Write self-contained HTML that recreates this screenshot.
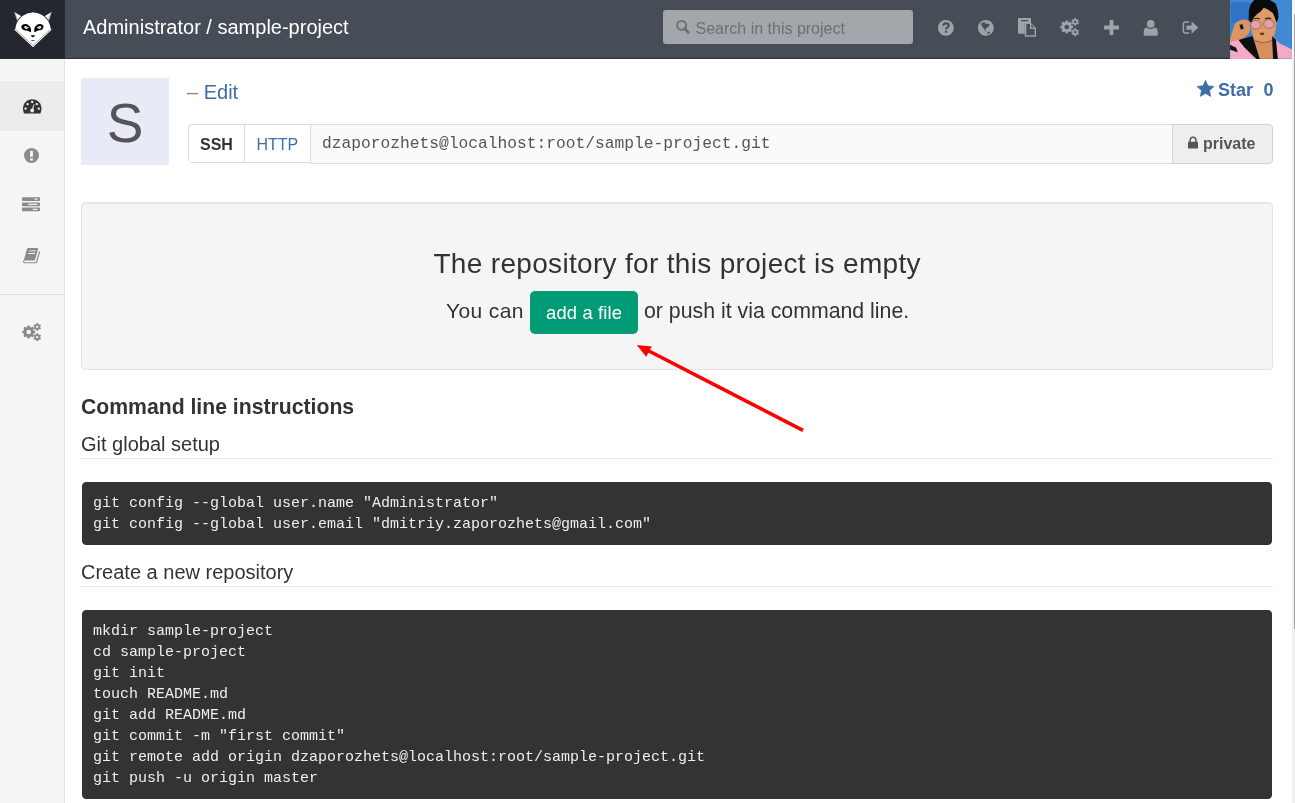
<!DOCTYPE html>
<html>
<head>
<meta charset="utf-8">
<style>
*{box-sizing:border-box}
html,body{margin:0;padding:0}
body{width:1295px;height:803px;overflow:hidden;position:relative;will-change:transform;background:#fff;font-family:"Liberation Sans",sans-serif;color:#333}
.abs{position:absolute}
.nw{white-space:nowrap}
#hdr{left:0;top:0;width:1295px;height:59px;background:#474d57;border-bottom:1px solid #2c3038}
#logo{left:0;top:0;width:65px;height:59px;background:#24272d;border-bottom:1px solid #24272d}
#title{left:83px;top:17px;font-size:20px;line-height:20px;color:#fff}
#search{left:663px;top:10px;width:250px;height:34px;background:#a3a6ab;border-radius:3px}
#search span{position:absolute;left:32.5px;top:11px;font-size:16px;line-height:16px;color:#6d6f73}
svg{position:absolute;overflow:visible}
.hi{fill:#9ea3aa}
#uav{left:1228px;top:0;width:66px;height:60px}
#sbar{left:1292px;top:59px;width:3px;height:744px;background:#f1f1f1}
#sbar2{left:1292px;top:0;width:3px;height:59px;background:#f6f6f6}
#thumb{left:1294px;top:14px;width:1px;height:615px;background:#a3a3a3}
#side{left:0;top:60px;width:65px;height:743px;background:#f5f5f5;border-right:1px solid #e3e3e3}
#sep{left:0;top:294px;width:64px;height:1px;background:#e0e0e0}
#act{left:0;top:81px;width:64px;height:50px;background:#ececec}
.si{fill:#8a8a8a}
#av{left:81px;top:78px;width:88px;height:87px;background:#e8eaf6;color:#555;font-size:55px;line-height:90px;text-align:center}
#edit{left:187px;top:82px;font-size:20px;line-height:20px;color:#888}
#edit b{font-weight:normal;color:#3f6ea5}
#star,#star0{left:1218px;top:80.5px;font-size:18px;line-height:18px;font-weight:bold;color:#3f6ea5}
#star0{left:1263.5px}
.grp{top:124px;height:39px;border:1px solid #dcdcdc;background:#fff;font-size:16px;line-height:16px}
#ssh{left:188px;width:57px;border-radius:4px 0 0 4px;font-weight:bold;color:#333}
#htp{left:244px;width:67px;color:#3f6ea5}
#ssh span,#htp span{position:absolute;top:12px}
#url{left:310px;width:863px;height:40px;background:#fafafa;font-family:"Liberation Mono",monospace;font-size:16.25px;line-height:16px;color:#555}
#url span{position:absolute;left:11px;top:10.5px}
#priv{left:1172px;width:101px;height:40px;background:#eee;border-color:#d2d2d2;border-radius:0 4px 4px 0;font-weight:bold;color:#555}
#priv span{position:absolute;left:30px;top:11.2px}
#well{left:81px;top:202px;width:1192px;height:168px;background:#f5f5f5;border:1px solid #e3e3e3;border-radius:4px;box-shadow:inset 0 1px 1px rgba(0,0,0,.05)}
#wt{left:81px;width:1192px;top:249.8px;text-align:center;font-size:28px;line-height:28.7px;letter-spacing:0.32px;text-indent:0.32px;color:#333}
#wl1{left:446px;top:299.6px;font-size:21px;line-height:21px;letter-spacing:0.4px;color:#333}
#wl2{left:644px;top:301px;font-size:21.3px;line-height:21px;color:#333}
#btn{left:530px;top:291px;width:108px;height:43px;background:#019b76;border-radius:5px;color:#fff;font-size:18.4px;line-height:18.4px}
#btn span{position:absolute;left:16px;top:13px;letter-spacing:0.15px}
#h4{left:81px;top:395.5px;font-size:21.2px;line-height:21px;font-weight:bold;color:#333}
.h5{left:81px;font-size:20px;line-height:20px;color:#333}
.hr{left:81px;width:1192px;height:1px;background:#e5e5e5}
pre{position:absolute;margin:0;left:82px;width:1190px;background:#333;border:1px solid #313131;border-radius:4px;padding:10px 10px 9px;font-family:"Liberation Mono",monospace;font-size:15px;line-height:21px;color:#eee}
</style>
</head>
<body>
<div id="hdr" class="abs"></div>
<div id="logo" class="abs"></div>
<div id="title" class="abs nw">Administrator / sample-project</div>
<div id="search" class="abs"><span class="nw">Search in this project</span></div>
<svg style="left:675px;top:19px" width="16" height="16" viewBox="0 0 16 16"><circle cx="6.6" cy="6.4" r="4.5" fill="none" stroke="#6d6f73" stroke-width="1.9"/><path d="M9.6,9.5 L13.4,13.5" stroke="#6d6f73" stroke-width="2.6" stroke-linecap="round"/></svg>

<!-- header icons -->
<svg style="left:938px;top:19.5px" width="16" height="16" viewBox="0 0 16 16"><circle class="hi" cx="7.85" cy="7.95" r="7.9"/><path d="M5.3,5.7 C5.5,4 6.7,3.3 8,3.3 C9.6,3.3 10.7,4.2 10.7,5.5 C10.7,6.8 9.8,7.2 9.2,7.6 C8.5,8 8.05,8.3 8.05,9.3" fill="none" stroke="#474d57" stroke-width="2.2"/><rect x="6.95" y="10.5" width="2.15" height="2.3" rx="0.4" fill="#474d57"/></svg>
<svg style="left:978px;top:19.5px" width="16" height="16" viewBox="0 0 16 16"><circle class="hi" cx="7.85" cy="7.95" r="7.9"/><path d="M3.15,3.52 L4.85,2.6 L6.94,2.34 L7.46,3.78 L8.51,4.04 L9.29,3.52 L10.6,3.78 L11.65,4.56 L11.65,5.35 L10.6,6.13 L9.82,7.18 L8.77,7.96 L8.25,8.49 L7.3,9.1 L7.4,10.3 L8.8,11.3 L8.3,11.7 L7.1,10.9 L6.16,9.01 L4.85,7.18 L3.8,5.87 L3.15,4.56Z M8.9,14.3 L9.8,12.0 L11.2,11.4 L12.2,12.4 L10.7,13.7Z" fill="#474d57"/></svg>
<svg style="left:1018px;top:18px" width="19" height="19" viewBox="0 0 19 19"><path class="hi" d="M0,0.7 Q0,0.1 0.6,0.1 L12.4,0.1 Q13,0.1 13,0.7 L13,4.9 L6.8,4.9 L6.8,15.7 L0.6,15.7 Q0,15.7 0,15.1Z"/><rect x="3" y="2.1" width="7.2" height="1.1" rx="0.5" fill="#474d57"/><path class="hi" fill-rule="evenodd" d="M6.8,4.9 L13,4.9 L18,9.9 L18,18.8 L6.8,18.8Z M8.3,6.1 L12,6.1 L12,10.9 L16.6,10.9 L16.6,17.3 L8.3,17.3Z M13.3,6.6 L16.3,9.6 L13.3,9.6Z"/></svg>
<svg style="left:1060px;top:18px" width="20" height="18" viewBox="0 0 20 18"><path class="hi" fill-rule="evenodd" d="M11.75,7.70 L13.17,7.66 L13.17,10.24 L11.75,10.20 L11.15,11.63 L12.19,12.62 L10.37,14.44 L9.38,13.40 L7.95,14.00 L7.99,15.42 L5.41,15.42 L5.45,14.00 L4.02,13.40 L3.03,14.44 L1.21,12.62 L2.25,11.63 L1.65,10.20 L0.23,10.24 L0.23,7.66 L1.65,7.70 L2.25,6.27 L1.21,5.28 L3.03,3.46 L4.02,4.50 L5.45,3.90 L5.41,2.48 L7.99,2.48 L7.95,3.90 L9.38,4.50 L10.37,3.46 L12.19,5.28 L11.15,6.27Z M4.40,8.95 a2.3,2.3 0 1,0 4.60,0 a2.3,2.3 0 1,0 -4.60,0Z M18.12,4.57 L19.04,5.04 L18.10,6.65 L17.24,6.10 L16.08,6.77 L16.13,7.79 L14.27,7.79 L14.32,6.77 L13.16,6.10 L12.30,6.65 L11.36,5.04 L12.28,4.57 L12.28,3.23 L11.36,2.76 L12.30,1.15 L13.16,1.70 L14.32,1.03 L14.27,0.01 L16.13,0.01 L16.08,1.03 L17.24,1.70 L18.10,1.15 L19.04,2.76 L18.12,3.23Z M14.05,3.90 a1.15,1.15 0 1,0 2.30,0 a1.15,1.15 0 1,0 -2.30,0Z M18.12,14.87 L19.04,15.34 L18.10,16.95 L17.24,16.40 L16.08,17.07 L16.13,18.09 L14.27,18.09 L14.32,17.07 L13.16,16.40 L12.30,16.95 L11.36,15.34 L12.28,14.87 L12.28,13.53 L11.36,13.06 L12.30,11.45 L13.16,12.00 L14.32,11.33 L14.27,10.31 L16.13,10.31 L16.08,11.33 L17.24,12.00 L18.10,11.45 L19.04,13.06 L18.12,13.53Z M14.05,14.20 a1.15,1.15 0 1,0 2.30,0 a1.15,1.15 0 1,0 -2.30,0Z"/></svg>
<svg style="left:1104px;top:19.7px" width="15" height="15" viewBox="0 0 15 15"><path class="hi" d="M5.6,0.4 Q5.6,0 6,0 L9,0 Q9.4,0 9.4,0.4 L9.4,5.6 L14.6,5.6 Q15,5.6 15,6 L15,9 Q15,9.4 14.6,9.4 L9.4,9.4 L9.4,14.6 Q9.4,15 9,15 L6,15 Q5.6,15 5.6,14.6 L5.6,9.4 L0.4,9.4 Q0,9.4 0,9 L0,6 Q0,5.6 0.4,5.6 L5.6,5.6Z"/></svg>
<svg style="left:1142.5px;top:19.5px" width="16" height="16" viewBox="0 0 16 16"><circle class="hi" cx="7.75" cy="3.95" r="3.85"/><path class="hi" d="M3.4,7.5 Q5.2,8.9 7.75,8.9 Q10.3,8.9 12.1,7.5 Q14.8,8.2 14.8,12.4 L14.8,14.6 Q14.8,15.8 13.6,15.8 L1.9,15.8 Q0.7,15.8 0.7,14.6 L0.7,12.4 Q0.7,8.2 3.4,7.5Z"/></svg>
<svg style="left:1181.5px;top:21px" width="17" height="14" viewBox="0 0 17 14"><path d="M7.2,0.9 L3.4,0.9 Q1.4,0.9 1.4,2.9 L1.4,10.1 Q1.4,12.1 3.4,12.1 L7.2,12.1" fill="none" stroke="#9ea3aa" stroke-width="1.5"/><path class="hi" d="M4.5,4.6 L9.6,4.6 L9.6,0.4 L16.3,6.6 L9.6,12.8 L9.6,8.8 L4.5,8.8Z"/></svg>

<svg id="uav" class="abs" viewBox="0 0 883 803" preserveAspectRatio="none">
<rect x="28" y="0" width="827" height="785" fill="#4289d4"/>
<path d="M40,40 Q160,10 300,40 L310,300 Q200,330 40,300Z" fill="#2f74c4"/>
<path d="M28,300 Q150,330 300,300 L300,470 Q180,520 28,480Z" fill="#3680cc"/>
<path d="M28,520 L90,320 Q140,265 230,262 Q300,275 305,340 L285,440 Q225,510 165,530 L120,610 L28,640Z" fill="#dc9464"/>
<path d="M334,483 L590,483 L603,785 L424,785Z" fill="#d88f5c"/>
<path d="M300,300 L315,170 L470,95 L625,160 L650,300 L630,440 L590,540 L470,575 L360,540 L320,440Z" fill="#de9a68"/>
<path d="M360,540 Q470,600 590,540" fill="none" stroke="#7a3e22" stroke-width="9"/>
<path d="M276,260 L280,140 L300,60 L351,0 L560,0 L640,50 L670,150 L675,240 L648,300 L628,240 L600,175 L540,130 L480,105 L430,160 L395,185 L355,225 L330,270 L305,300Z" fill="#0a0a0a"/>
<path d="M350,245 Q390,225 430,250 L425,262 Q390,245 355,258Z" fill="#2a1a12"/>
<path d="M490,250 Q530,225 580,240 L578,254 Q535,242 495,262Z" fill="#2a1a12"/>
<path d="M28,560 L142,535 L219,631 L379,789 L28,789Z" fill="#f2aac6"/>
<path d="M142,535 L328,483 L424,789 L379,789 L219,631Z" fill="#0e0e0e"/>
<path d="M590,483 L642,535 L699,586 L855,660 L855,785 L667,785Z" fill="#f2aac6"/>
<path d="M590,483 L642,535 L667,789 L603,789Z" fill="#0e0e0e"/>
<path d="M28,600 L110,640 L130,700 L28,665Z" fill="#161616"/>
<ellipse cx="372" cy="332" rx="70" ry="58" fill="#e4a0ae" stroke="#7a4a3a" stroke-width="8"/>
<ellipse cx="547" cy="322" rx="70" ry="58" fill="#e4a0ae" stroke="#7a4a3a" stroke-width="8"/>
<path d="M152,330 L195,325 L210,385 L172,395Z" fill="#161616"/>
<path d="M424,440 Q456,428 488,440 L478,464 Q456,472 434,464Z" fill="#6e3220"/>
</svg>
<div id="sbar2" class="abs"></div>
<div id="sbar" class="abs"></div>
<div id="thumb" class="abs"></div>

<!-- logo -->
<svg style="left:10px;top:8px" width="46" height="42" viewBox="0 0 879 803">
<path d="M80,75 L235,165 L140,255Z" fill="#fff"/>
<path d="M795,75 L645,165 L740,255Z" fill="#fff"/>
<path d="M92,100 L150,235" fill="none" stroke="#24272d" stroke-width="7"/>
<path d="M783,100 L725,235" fill="none" stroke="#24272d" stroke-width="7"/>
<path d="M85,430 A355,355 0 0,1 795,430Z" fill="#24272d"/><path d="M78,410 L100,410 A340,340 0 0,1 405,92 L440,80 L475,92 A340,340 0 0,1 780,410 L800,410 L440,750Z" fill="#fff"/>
<path d="M115,415 L440,718 L765,415" fill="none" stroke="#24272d" stroke-width="8"/>
<path d="M215,350 Q240,300 300,305 Q380,320 400,400 Q410,470 380,460 Q350,420 290,430 Q220,420 215,350Z" fill="#000"/>
<path d="M640,345 Q620,300 560,305 Q480,320 465,400 Q455,470 485,460 Q515,420 575,425 Q640,415 640,345Z" fill="#000"/>
<path d="M270,350 Q320,335 360,375 Q330,410 290,395 Q260,380 270,350Z" fill="#cfcfcf"/>
<path d="M600,350 Q550,335 510,375 Q540,410 580,395 Q610,380 600,350Z" fill="#cfcfcf"/>
<path d="M395,520 L480,520 Q460,555 437,557 Q415,555 395,520Z" fill="#000"/>
<path d="M405,612 L470,612 L465,628 L410,628Z" fill="#222"/>
</svg>

<!-- sidebar -->
<div id="side" class="abs"></div>
<div id="act" class="abs"></div>
<div id="sep" class="abs"></div>
<svg style="left:22.5px;top:98.5px" width="19" height="15" viewBox="0 0 19 15"><path fill="#333" fill-rule="evenodd" d="M9.2,0.3 C14.4,0.3 18.5,4.4 18.5,9.6 C18.5,11.4 18.1,13 17.4,14.4 L1,14.4 C0.3,13 0,11.4 0,9.6 C0,4.4 4,0.3 9.2,0.3Z"/><g fill="#ececec"><circle cx="4.6" cy="5.1" r="1.2"/><circle cx="9.2" cy="2.9" r="1.2"/><circle cx="13.8" cy="5.1" r="1.2"/><circle cx="2.6" cy="9.6" r="1.2"/><circle cx="15.8" cy="9.6" r="1.2"/><circle cx="9.2" cy="11.5" r="1.9"/><path d="M8.4,11 L9.9,11.3 L11.5,5.1 L10.9,5Z"/></g></svg>
<svg style="left:24px;top:148px" width="15" height="15" viewBox="0 0 15 15"><circle class="si" cx="7.5" cy="7.5" r="7.5"/><rect x="6.1" y="2.8" width="2.8" height="6" fill="#f5f5f5"/><rect x="6.1" y="10.3" width="2.8" height="2.3" fill="#f5f5f5"/></svg>
<svg style="left:22.1px;top:197.3px" width="18" height="15" viewBox="0 0 18 15"><path class="si" fill-rule="evenodd" d="M1,0.3 L17,0.3 Q18,0.3 18,1.3 L18,3 Q18,4 17,4 L1,4 Q0,4 0,3 L0,1.3 Q0,0.3 1,0.3Z M12.4,1.5 L15.4,1.5 L15.4,2.8 L12.4,2.8Z M1,5.5 L17,5.5 Q18,5.5 18,6.5 L18,8.2 Q18,9.2 17,9.2 L1,9.2 Q0,9.2 0,8.2 L0,6.5 Q0,5.5 1,5.5Z M6.3,6.7 L15.4,6.7 L15.4,8 L6.3,8Z M1,10.6 L17,10.6 Q18,10.6 18,11.6 L18,13.3 Q18,14.3 17,14.3 L1,14.3 Q0,14.3 0,13.3 L0,11.6 Q0,10.6 1,10.6Z M10.8,11.8 L15.4,11.8 L15.4,13.1 L10.8,13.1Z"/></svg>
<svg style="left:23px;top:248px" width="17" height="15" viewBox="0 0 17 15"><path class="si" d="M5.5,0.1 L14.4,0.1 Q15.2,0.1 15,0.9 L12,12 Q11.9,12.45 11.4,12.45 L1.1,12.45 L0.6,13 L3.9,1.2 Q4.2,0.1 5.5,0.1Z"/><path d="M0.7,12.6 Q0.3,14.75 2,14.75 L12.6,14.75 Q13.3,14.75 13.6,14 L16.6,3.4" fill="none" stroke="#888" stroke-width="1.2"/><path fill="#f5f5f5" d="M6.4,2.2 L12.9,2.2 L12.5,3.6 L6,3.6Z" opacity="0.75"/><path fill="#f5f5f5" d="M5.5,5 L12.1,5 L11.8,6 L5.2,6Z"/></svg>
<svg style="left:21.6px;top:322.5px" width="20" height="18" viewBox="0 0 20 18"><path class="si" fill-rule="evenodd" d="M11.75,7.70 L13.17,7.66 L13.17,10.24 L11.75,10.20 L11.15,11.63 L12.19,12.62 L10.37,14.44 L9.38,13.40 L7.95,14.00 L7.99,15.42 L5.41,15.42 L5.45,14.00 L4.02,13.40 L3.03,14.44 L1.21,12.62 L2.25,11.63 L1.65,10.20 L0.23,10.24 L0.23,7.66 L1.65,7.70 L2.25,6.27 L1.21,5.28 L3.03,3.46 L4.02,4.50 L5.45,3.90 L5.41,2.48 L7.99,2.48 L7.95,3.90 L9.38,4.50 L10.37,3.46 L12.19,5.28 L11.15,6.27Z M4.40,8.95 a2.3,2.3 0 1,0 4.60,0 a2.3,2.3 0 1,0 -4.60,0Z M18.12,4.57 L19.04,5.04 L18.10,6.65 L17.24,6.10 L16.08,6.77 L16.13,7.79 L14.27,7.79 L14.32,6.77 L13.16,6.10 L12.30,6.65 L11.36,5.04 L12.28,4.57 L12.28,3.23 L11.36,2.76 L12.30,1.15 L13.16,1.70 L14.32,1.03 L14.27,0.01 L16.13,0.01 L16.08,1.03 L17.24,1.70 L18.10,1.15 L19.04,2.76 L18.12,3.23Z M14.05,3.90 a1.15,1.15 0 1,0 2.30,0 a1.15,1.15 0 1,0 -2.30,0Z M18.12,14.87 L19.04,15.34 L18.10,16.95 L17.24,16.40 L16.08,17.07 L16.13,18.09 L14.27,18.09 L14.32,17.07 L13.16,16.40 L12.30,16.95 L11.36,15.34 L12.28,14.87 L12.28,13.53 L11.36,13.06 L12.30,11.45 L13.16,12.00 L14.32,11.33 L14.27,10.31 L16.13,10.31 L16.08,11.33 L17.24,12.00 L18.10,11.45 L19.04,13.06 L18.12,13.53Z M14.05,14.20 a1.15,1.15 0 1,0 2.30,0 a1.15,1.15 0 1,0 -2.30,0Z"/></svg>

<!-- project header -->
<div id="av" class="abs">S</div>
<div id="edit" class="abs nw">– <b>Edit</b></div>
<svg style="left:1197px;top:79.8px" width="17" height="17" viewBox="0 0 17 17"><path fill="#3f6ea5" stroke="#3f6ea5" stroke-width="0.6" stroke-linejoin="round" d="M8.50,0.30 L11.03,5.72 L16.96,6.45 L12.59,10.53 L13.73,16.40 L8.50,13.50 L3.27,16.40 L4.41,10.53 L0.04,6.45 L5.97,5.72Z"/></svg>
<div id="star" class="abs nw">Star</div><div id="star0" class="abs nw">0</div>
<div id="ssh" class="abs grp"><span style="left:11px">SSH</span></div>
<div id="htp" class="abs grp"><span style="left:11.5px">HTTP</span></div>
<div id="url" class="abs grp"><span class="nw">dzaporozhets@localhost:root/sample-project.git</span></div>
<div id="priv" class="abs grp"><svg style="left:15px;top:10.5px" width="10" height="13" viewBox="0 0 10 13"><path fill="none" stroke="#555" stroke-width="1.5" d="M2.1,6.5 L2.1,4.2 A2.9,2.9 0 0,1 7.9,4.2 L7.9,6.5"/><rect x="0" y="5.8" width="10" height="6.8" rx="0.6" fill="#555"/></svg><span class="nw">private</span></div>

<!-- empty repo well -->
<div id="well" class="abs"></div>
<div id="wt" class="abs nw">The repository for this project is empty</div>
<div id="wl1" class="abs nw">You can</div>
<div id="btn" class="abs"><span class="nw">add a file</span></div>
<div id="wl2" class="abs nw">or push it via command line.</div>

<!-- arrow -->
<svg style="left:0;top:0" width="1295" height="803"><path d="M803,430.4 L647,350" stroke="#ff0000" stroke-width="3.6" fill="none"/><path d="M636.8,345 L651.8,346.6 L646.2,356.8Z" fill="#ff0000"/></svg>

<div id="h4" class="abs nw">Command line instructions</div>
<div class="abs h5 nw" style="top:434px">Git global setup</div>
<div class="abs hr" style="top:458px"></div>
<pre style="top:482px">git config --global user.name "Administrator"
git config --global user.email "dmitriy.zaporozhets@gmail.com"</pre>
<div class="abs h5 nw" style="top:561.7px">Create a new repository</div>
<div class="abs hr" style="top:586px"></div>
<pre style="top:610px">mkdir sample-project
cd sample-project
git init
touch README.md
git add README.md
git commit -m "first commit"
git remote add origin dzaporozhets@localhost:root/sample-project.git
git push -u origin master</pre>
</body>
</html>
